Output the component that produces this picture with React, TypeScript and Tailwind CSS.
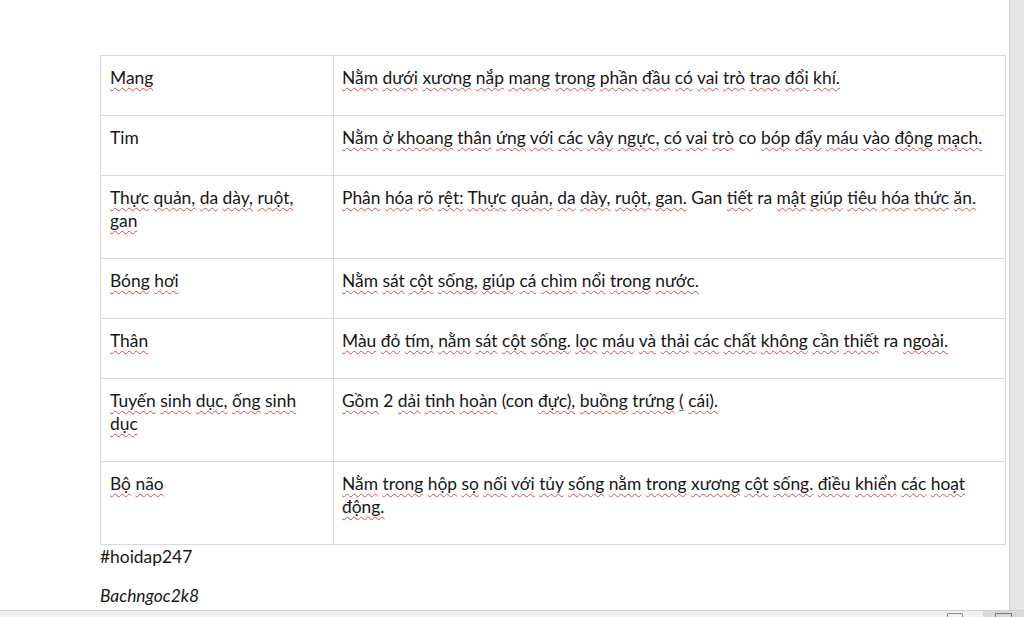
import React from 'react'

const rows: { name: string[]; desc: string[] }[] = [
  { name: ['Mang'], desc: ['Nằm dưới xương nắp mang trong phần đầu có vai trò trao đổi khí.'] },
  { name: ['Tim'], desc: ['Nằm ở khoang thân ứng với các vây ngực, có vai trò co bóp đẩy máu vào động mạch.'] },
  { name: ['Thực quản, da dày, ruột,', 'gan'], desc: ['Phân hóa rõ rệt: Thực quản, da dày, ruột, gan. Gan tiết ra mật giúp tiêu hóa thức ăn.'] },
  { name: ['Bóng hơi'], desc: ['Nằm sát cột sống, giúp cá chìm nổi trong nước.'] },
  { name: ['Thân'], desc: ['Màu đỏ tím, nằm sát cột sống. lọc máu và thải các chất không cần thiết ra ngoài.'] },
  { name: ['Tuyến sinh dục, ống sinh', 'dục'], desc: ['Gồm 2 dải tinh hoàn (con đực), buồng trứng ( cái).'] },
  { name: ['Bộ não'], desc: ['Nằm trong hộp sọ nối với tủy sống nằm trong xương cột sống. điều khiển các hoạt', 'động.'] },
]

// words Word's English checker lets through
const ok = new Set(['Tim', 'co', 'ra', 'Gan', '2', '(con', 'Gan.'])

const Line = ({ text }: { text: string }) => {
  const words = text.split(' ')
  return (
    <div className="whitespace-nowrap">
      {words.map((w, i) => {
        let el: React.ReactNode
        if (w === '(') {
          el = <span className="underline decoration-[#4a78c8] underline-offset-[3px]">(</span>
        } else if (ok.has(w) || w === '') {
          el = w
        } else {
          el = (
            <span className="underline decoration-wavy decoration-[#d84b4b] decoration-1 underline-offset-[3px]">
              {w}
            </span>
          )
        }
        return (
          <React.Fragment key={i}>
            {el}
            {i < words.length - 1 ? ' ' : ''}
          </React.Fragment>
        )
      })}
    </div>
  )
}

const App = () => {
  return (
    <div className="h-[617px] w-[1024px] overflow-hidden bg-white flex flex-col text-[17.4px] leading-[23px] text-[#161616]" style={{ fontFamily: 'Lato, "Open Sans", sans-serif' }}>
      <div className="flex flex-1 min-h-0">
        {/* page */}
        <main className="flex-1 pt-[55px] pl-[100px]">
          <div className="w-[906px] border border-[#dadada]">
            {rows.map((r, i) => (
              <div key={i} className={`grid grid-cols-[233px_1fr] ${i > 0 ? 'border-t border-[#dadada]' : ''}`}>
                <div className="pl-[9px] pt-[10px] pb-[26px] border-r border-[#dadada]">
                  {r.name.map((t, j) => <Line key={j} text={t} />)}
                </div>
                <div className="pl-[8px] pt-[10px] pb-[26px]">
                  {r.desc.map((t, j) => <Line key={j} text={t} />)}
                </div>
              </div>
            ))}
          </div>
          <p className="leading-[24px]">#hoidap247</p>
          <p className="mt-[15px] leading-[24px] italic">Bachngoc2k8</p>
        </main>
        {/* scrollbar */}
        <div className="w-[15px] bg-[#e6e6e6] border-l border-[#d2d2d2]" />
      </div>
      {/* status bar */}
      <div className="h-[7px] border-t border-[#d0d0d0] bg-[#f1f1f1] flex justify-end items-start">
        <div className="mr-[20px] mt-[2px] w-[16px] h-[10px] border border-[#8a8a8a] rounded-[1px]" />
        <div className="w-[41px] h-full bg-[#d9d9d9] flex justify-center">
          <div className="mt-[2px] w-[17px] h-[10px] border border-[#7a7a7a]" />
        </div>
      </div>
    </div>
  )
}

export default App
